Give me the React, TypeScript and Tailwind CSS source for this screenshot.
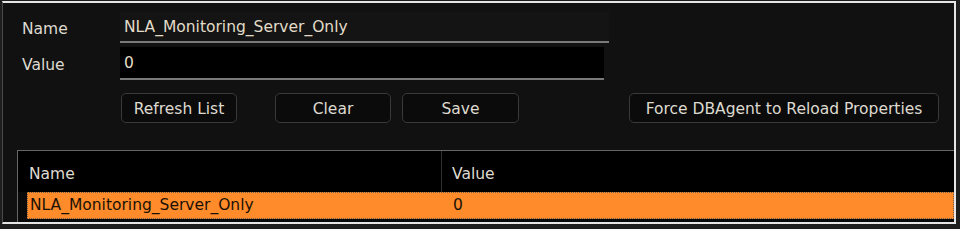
import React from "react";

const font = { fontFamily: '"DejaVu Sans", "Liberation Sans", sans-serif' };

function Btn({ label, w, ml }: { label: string; w: string; ml: string }) {
  return (
    <button
      className={`${w} ${ml} h-[30px] pt-[3px] rounded-[5px] border border-[#3a3a3a] bg-[#0b0b0b] text-[15.5px] text-[#dedad0] flex items-center justify-center`}
    >
      {label}
    </button>
  );
}

export default function App() {
  return (
    <div className="w-[960px] h-[229px] bg-[#1e1e1e] overflow-hidden" style={font}>
      <div className="ml-[2px] mt-[1px] w-[954px] h-[223px] bg-[#111111] border-t-2 border-r-2 border-b-2 border-[#e6e6e6] border-l border-l-[#4a4a4a] flex flex-col">
        {/* Name */}
        <div className="flex items-center mt-[9px] h-[31px]">
          <span className="w-[117px] pl-[19px] pt-[4px] text-[15.5px] text-[#dedad0]">Name</span>
          <div className="w-[489px] h-[31px] bg-[#141414] border-b-2 border-[#7a7a7a] flex items-center pl-[4px] pt-[2px] text-[15.5px] text-[#e2dcc8]">
            NLA_Monitoring_Server_Only
          </div>
        </div>
        {/* Value */}
        <div className="flex items-center mt-[4px] h-[33px]">
          <span className="w-[117px] pl-[19px] pt-[4px] text-[15.5px] text-[#dedad0]">Value</span>
          <div className="w-[484px] h-[33px] bg-black border-b-2 border-[#7a7a7a] flex items-center pl-[4px] pt-[2px] text-[15.5px] text-[#e2dcc8]">
            0
          </div>
        </div>
        {/* Buttons */}
        <div className="flex mt-[13px]">
          <Btn label="Refresh List" w="w-[116px]" ml="ml-[118px]" />
          <Btn label="Clear" w="w-[116px]" ml="ml-[38px]" />
          <Btn label="Save" w="w-[117px]" ml="ml-[11px]" />
          <Btn label="Force DBAgent to Reload Properties" w="w-[310px]" ml="ml-[110px]" />
        </div>
        {/* Table */}
        <div className="ml-[14px] mt-[27px] flex-1 border-t border-l border-[#666666] bg-[#0a0a0a] flex flex-col">
          <div className="h-[41px] bg-black flex text-[15.5px] text-[#dedad0]">
            <div className="w-[424px] pl-[11px] pt-[12px] border-r border-[#2e2e2e]">Name</div>
            <div className="pl-[10px] pt-[12px]">Value</div>
          </div>
          <div className="ml-[9px] h-[27px] bg-[#ff8b2b] border border-dotted border-[#6a5a4a] flex items-center text-[15.5px] text-[#1a1205]">
            <div className="w-[415px] pl-[2px]">NLA_Monitoring_Server_Only</div>
            <div className="pl-[10px]">0</div>
          </div>
        </div>
      </div>
    </div>
  );
}
